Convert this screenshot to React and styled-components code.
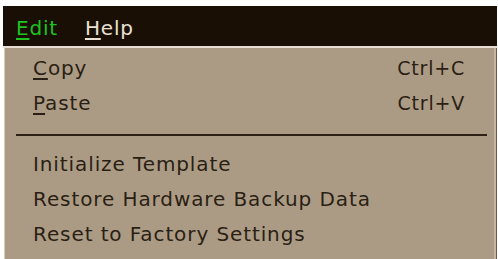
import React from "react";
import styled, { createGlobalStyle } from "styled-components";

const GlobalStyle = createGlobalStyle`
  html, body {
    margin: 0;
    padding: 0;
    background: #ffffff;
  }
  body {
    font-family: "DejaVu Sans", "Liberation Sans", sans-serif;
  }
`;

const menus = [
  { key: "E", rest: "dit", active: true },
  { key: "H", rest: "elp", active: false },
];

const items = [
  { key: "C", rest: "opy", shortcut: "Ctrl+C" },
  { key: "P", rest: "aste", shortcut: "Ctrl+V" },
  { separator: true },
  { label: "Initialize Template" },
  { label: "Restore Hardware Backup Data" },
  { label: "Reset to Factory Settings" },
];

const App = () => {
  return (
    <>
      <GlobalStyle />
      <Screen>
        <MenuBar>
          {menus.map((m) => (
            <MenuTitle key={m.key} active={m.active}>
              <Mnemonic>{m.key}</Mnemonic>
              {m.rest}
            </MenuTitle>
          ))}
        </MenuBar>

        <Dropdown>
          {items.map((item, i) =>
            item.separator ? (
              <Separator key={i} />
            ) : (
              <Item key={i}>
                <span>
                  {item.key ? (
                    <>
                      <Mnemonic>{item.key}</Mnemonic>
                      {item.rest}
                    </>
                  ) : (
                    item.label
                  )}
                </span>
                {item.shortcut && <Shortcut>{item.shortcut}</Shortcut>}
              </Item>
            )
          )}
        </Dropdown>
      </Screen>
    </>
  );
};

const Screen = styled.div`
  width: 498px;
  height: 259px;
  padding: 6px 1px 0 3px;
  box-sizing: border-box;
  overflow: hidden;
  background: #ffffff;
`;

const MenuBar = styled.div`
  height: 42px;
  background: #1a0f05;
  display: flex;
  align-items: center;
  gap: 27px;
  padding-left: 13px;
  box-sizing: border-box;
  border-bottom: 2px solid #e6ded4;
`;

const MenuTitle = styled.div`
  font-size: 20px;
  letter-spacing: 0.8px;
  line-height: 1;
  color: ${(p) => (p.active ? "#1fc21f" : "#e9e1d4")};
  padding-top: 4px;
`;

const Mnemonic = styled.span`
  text-decoration: underline;
  text-underline-offset: 3px;
  text-decoration-thickness: 2px;
`;

const Dropdown = styled.div`
  margin: 0 1px 0 1px;
  height: 220px;
  background: #ac9b84;
  border-left: 1px solid #d3c7b7;
  border-right: 2px solid #c5b6a2;
  box-shadow: 1px 0 0 #6b5a48;
  padding-top: 2px;
  box-sizing: border-box;
`;

const Item = styled.div`
  height: 35px;
  display: flex;
  align-items: center;
  justify-content: space-between;
  padding: 0 29px 0 28px;
  font-size: 20px;
  letter-spacing: 0.9px;
  color: #2a1f14;
`;

const Shortcut = styled.span`
  font-size: 19px;
  letter-spacing: 0.8px;
`;

const Separator = styled.div`
  height: 2px;
  background: #2e2216;
  margin: 14px 7px 10px 11px;
`;

export default App;
